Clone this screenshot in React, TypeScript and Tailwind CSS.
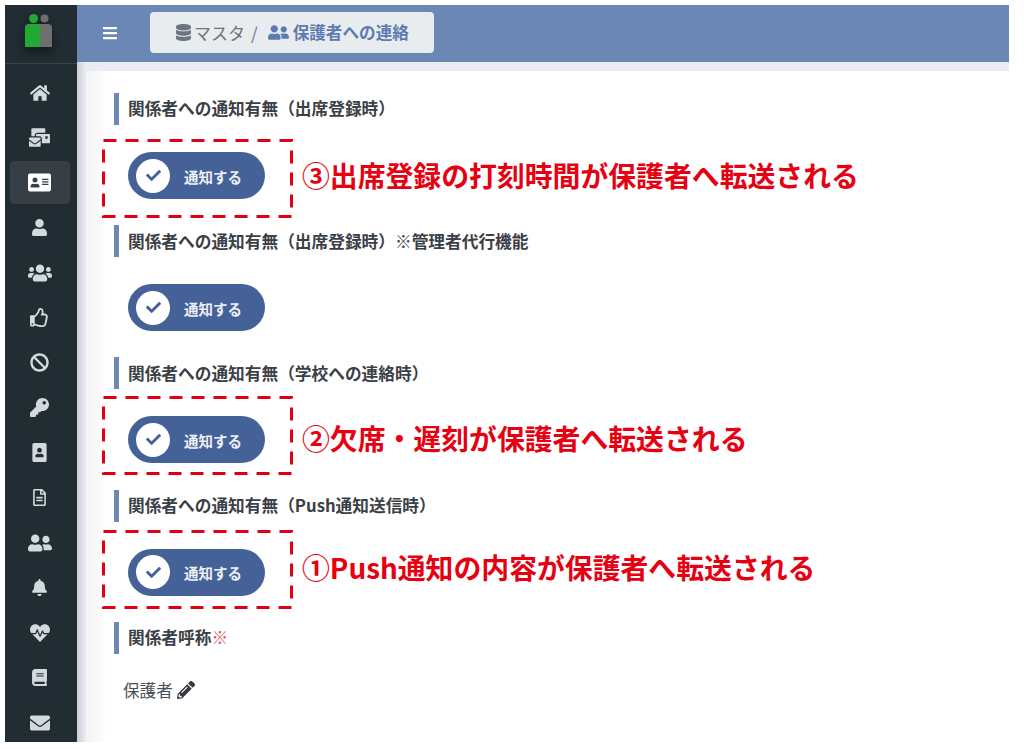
import React from "react";
import {
  FaAddressCard, FaBan, FaBars, FaBell, FaBook, FaCheck, FaDatabase, FaEnvelope, FaHeartbeat, FaHome, FaKey,
  FaMailBulk, FaPencilAlt, FaPortrait, FaRegFileAlt, FaRegThumbsUp, FaUser, FaUserFriends, FaUsers,
} from "react-icons/fa";

const navItems = [
  { icon: FaHome, size: 20 },
  { icon: FaMailBulk, size: 21 },
  { icon: FaAddressCard, size: 23, active: true },
  { icon: FaUser, size: 17 },
  { icon: FaUsers, size: 24 },
  { icon: FaRegThumbsUp, size: 19 },
  { icon: FaBan, size: 19 },
  { icon: FaKey, size: 19 },
  { icon: FaPortrait, size: 19 },
  { icon: FaRegFileAlt, size: 17 },
  { icon: FaUserFriends, size: 24 },
  { icon: FaBell, size: 17 },
  { icon: FaHeartbeat, size: 20 },
  { icon: FaBook, size: 17 },
  { icon: FaEnvelope, size: 20 },
];

const Heading = ({ children }: { children: React.ReactNode }) => (
  <div className="flex h-8 items-center border-l-[5px] border-[#6d88b6] pl-[9px] text-[16.7px] font-bold text-[#3a4046]">
    {children}
  </div>
);

const NotifyRow = ({ note, boxTop, noteTop }: { note?: string; boxTop?: string; noteTop?: string }) => (
  <div className="relative h-[100.2px] pt-[27px]">
    <div className="ml-[14px] flex h-[47px] w-[137px] items-center rounded-full bg-[#456298] pl-2">
      <span className="flex h-[34px] w-[34px] items-center justify-center rounded-full bg-white text-[#456298]">
        <FaCheck size={15} />
      </span>
      <span className="ml-[14px] pt-[2px] text-[14.5px] font-bold text-[#eef1f6]">通知する</span>
    </div>
    {boxTop && (
      <svg className={`absolute left-[-12px] ${boxTop}`} width="192" height="80" fill="none">
        <rect x="1.5" y="1.5" width="188" height="76" stroke="#e00012" strokeWidth="3" strokeDasharray="13 9" />
      </svg>
    )}
    {note && (
      <span className={`absolute left-[188px] whitespace-nowrap text-[27.85px] font-bold leading-[40px] text-[#e60012] ${noteTop}`}>
        {note}
      </span>
    )}
  </div>
);

export default function App() {
  return (
    <div className="flex h-[749px] w-[1024px] overflow-hidden bg-white pb-[7px] pl-[5px] pr-[15px] pt-[5px] font-['Noto_Sans_CJK_JP',sans-serif]">
      <aside className="flex w-[72px] shrink-0 flex-col overflow-hidden bg-[#212d33]">
        <div className="flex h-[59px] shrink-0 items-center justify-center border-b border-[#39444a] pb-[7px] pr-[5px]">
          <svg width="27" height="34" viewBox="0 0 27 34" className="drop-shadow-[0_5px_4px_rgba(0,0,0,0.45)]">
            <defs>
              <linearGradient id="logoFill" x1="0" x2="1" y1="0" y2="0">
                <stop offset="0.5" stopColor="#22a834" />
                <stop offset="0.62" stopColor="#6e6e6e" />
              </linearGradient>
            </defs>
            <circle cx="8.5" cy="4.5" r="4.5" fill="#22a834" />
            <circle cx="19.5" cy="4.5" r="4" fill="#6e6e6e" />
            <path d="M0 14q0-4 4-4h19q4 0 4 4v19H0z" fill="url(#logoFill)" />
          </svg>
        </div>
        <nav className="flex shrink-0 flex-col items-center pr-[3px] pt-[6px]">
          {navItems.map(({ icon: Icon, size, active }, i) => (
            <div key={i} className="flex h-[45px] w-[60px] shrink-0 items-center justify-center">
              <div
                className={`flex h-[43px] w-[60px] items-center justify-center rounded ${active ? "bg-[#383f44] text-white" : "text-[#d3dadd]"}`}
              >
                <Icon size={size} />
              </div>
            </div>
          ))}
        </nav>
      </aside>
      <div className="flex min-w-0 flex-1 flex-col bg-[linear-gradient(to_right,#cdced1,#e9ecf1_9px)]">
        <header className="flex h-[57px] shrink-0 items-center bg-[#6a87b6] pb-[2px] pl-[25px]">
          <FaBars size={16} className="text-white" />
          <div className="ml-[32px] flex h-[41px] w-[284px] items-center rounded bg-[#e9ecef] pl-[25px] text-[17px] text-[#6c757d]">
            <FaDatabase size={17} />
            <span className="ml-[2px]">マスタ</span>
            <span className="ml-[6px] mr-[10px]">/</span>
            <span className="flex items-center gap-[4px] text-[16.6px] font-bold text-[#5c7cb0]">
              <FaUserFriends size={21} />
              保護者への連絡
            </span>
          </div>
        </header>
        <main className="ml-[9px] mt-[9px] min-h-0 flex-1 bg-[linear-gradient(to_right,#f3f3f4,#ffffff_22px)] pl-[28px] pt-[22px]">
          <Heading>関係者への通知有無（出席登録時）</Heading>
          <NotifyRow boxTop="top-[14px]" noteTop="top-[30px]" note="③出席登録の打刻時間が保護者へ転送される" />
          <Heading>関係者への通知有無（出席登録時）※管理者代行機能</Heading>
          <NotifyRow />
          <Heading>関係者への通知有無（学校への連絡時）</Heading>
          <NotifyRow boxTop="top-[7px]" noteTop="top-[29px]" note="②欠席・遅刻が保護者へ転送される" />
          <Heading>関係者への通知有無（Push通知送信時）</Heading>
          <NotifyRow boxTop="top-[8px]" noteTop="top-[25px]" note="①Push通知の内容が保護者へ転送される" />
          <Heading>
            関係者呼称<span className="font-normal text-[#e0555f]">※</span>
          </Heading>
          <div className="ml-[9px] mt-[24px] flex items-center gap-[4px] text-[16.6px] text-[#495057]">
            保護者
            <FaPencilAlt size={18} className="text-[#343a40]" />
          </div>
        </main>
      </div>
    </div>
  );
}
